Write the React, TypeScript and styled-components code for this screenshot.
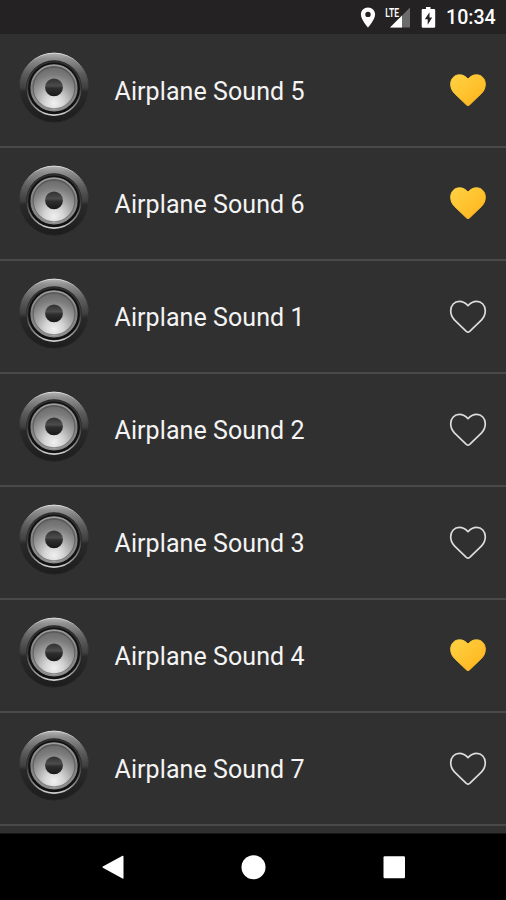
import React from "react";
import styled, { createGlobalStyle } from "styled-components";

const GlobalStyle = createGlobalStyle`
  * { box-sizing: border-box; }
  body { margin: 0; background: #000; font-family: Roboto, sans-serif; }
`;

const Screen = styled.div`
  width: 506px;
  height: 900px;
  display: flex;
  flex-direction: column;
  background: #303030;
  overflow: hidden;
`;

const StatusBar = styled.header`
  flex: none;
  height: 34px;
  display: flex;
  align-items: center;
  justify-content: flex-end;
  padding-right: 10px;
  background: #242223;
  color: #fff;
`;

const StatusIcons = styled.svg`
  display: block;
  margin-right: 10px;
`;

const Clock = styled.time`
  font-size: 19.6px;
  line-height: 34px;
  font-weight: 500;
  width: 50px;
  white-space: nowrap;
  padding-top: 2px;
`;

const List = styled.ul`
  flex: 1;
  min-height: 0;
  margin: 0;
  padding: 1px 0 0;
  list-style: none;
  overflow: hidden;
  border-bottom: 1px solid #161616;
`;

const Row = styled.li`
  height: 113px;
  display: flex;
  align-items: center;
  padding: 0 18px 0 15px;
  border-bottom: 2px solid #494949;
`;

const Label = styled.span`
  flex: 1;
  margin-left: 21.5px;
  padding-top: 3px;
  font-size: 25px;
  line-height: 30px;
  letter-spacing: 0.08px;
  color: #f4f4f4;
  white-space: nowrap;
`;

const HeartButton = styled.button`
  width: 40px;
  height: 40px;
  padding: 0;
  border: 0;
  background: none;
  svg { display: block; }
`;

const NavBar = styled.nav`
  flex: none;
  height: 66px;
  display: flex;
  align-items: center;
  justify-content: space-between;
  padding: 0 98px;
  background: #000;
`;

const NavIcon = styled.svg`
  display: block;
  fill: #fff;
`;

const Gradients = styled.svg`
  display: block;
`;

const SharedGradients = () => (
  <Gradients width="0" height="0" aria-hidden>
    <defs>
      <linearGradient id="rim" x1="0" y1="0" x2="0" y2="1">
        <stop offset="0" stopColor="#b4b4b4" />
        <stop offset="0.08" stopColor="#909090" />
        <stop offset="0.3" stopColor="#5c5c5c" />
        <stop offset="0.5" stopColor="#404040" />
        <stop offset="0.56" stopColor="#292929" />
        <stop offset="1" stopColor="#1d1d1d" />
      </linearGradient>
      <linearGradient id="edge" x1="0" y1="0" x2="0" y2="1">
        <stop offset="0" stopColor="#e2e2e2" />
        <stop offset="0.2" stopColor="#707070" />
        <stop offset="0.5" stopColor="#303030" />
        <stop offset="1" stopColor="#222" />
      </linearGradient>
      <linearGradient id="lip" x1="0" y1="0" x2="0" y2="1">
        <stop offset="0" stopColor="#303030" />
        <stop offset="0.5" stopColor="#3c3c3c" />
        <stop offset="0.8" stopColor="#808080" />
        <stop offset="1" stopColor="#d0d0d0" />
      </linearGradient>
      <linearGradient id="surround" x1="0" y1="0" x2="0" y2="1">
        <stop offset="0" stopColor="#9c9c9c" />
        <stop offset="0.5" stopColor="#808080" />
        <stop offset="1" stopColor="#8c8c8c" />
      </linearGradient>
      <radialGradient id="cone" cx="0.5" cy="0.84" r="0.84">
        <stop offset="0" stopColor="#f0f0f0" />
        <stop offset="0.25" stopColor="#d4d4d4" />
        <stop offset="0.5" stopColor="#a4a4a4" />
        <stop offset="0.75" stopColor="#7c7c7c" />
        <stop offset="1" stopColor="#666" />
      </radialGradient>
      <linearGradient id="cap" x1="0" y1="0" x2="0" y2="1">
        <stop offset="0" stopColor="#303030" />
        <stop offset="0.4" stopColor="#4c4c4c" />
        <stop offset="0.55" stopColor="#2e2e2e" />
        <stop offset="1" stopColor="#181818" />
      </linearGradient>
      <linearGradient id="gold" x1="0" y1="0" x2="1" y2="1">
        <stop offset="0" stopColor="#ffd244" />
        <stop offset="1" stopColor="#ffb31a" />
      </linearGradient>
    </defs>
  </Gradients>
);

const Speaker = () => (
  <svg width="78" height="78" viewBox="0 0 78 78" aria-hidden>
    <circle cx="39" cy="35.6" r="34.5" fill="url(#rim)" stroke="url(#edge)" strokeWidth="1" />
    <circle cx="39" cy="36.2" r="27.9" fill="#222" />
    <circle cx="39" cy="36.4" r="26.7" fill="#111" stroke="url(#lip)" strokeWidth="1.6" />
    <circle cx="39" cy="35.9" r="22.7" fill="url(#cone)" stroke="url(#surround)" strokeWidth="1.8" />
    <circle cx="39" cy="35.9" r="20.9" fill="none" stroke="#4c4c4c" strokeOpacity="0.6" strokeWidth="1.3" />
    <circle cx="39" cy="35.4" r="8.9" fill="url(#cap)" />
  </svg>
);

const HEART_PATH =
  "M20 35.2 C19.4 35.2 18.9 34.8 18.3 34.3 L6.4 22.9 C4 20.3 2.7 17.3 2.7 13.8 C2.7 8.3 6.5 4.4 11.4 4.4 C15.2 4.4 17.6 6 20 8.7 C22.4 6 24.8 4.4 28.6 4.4 C33.5 4.4 37.3 8.3 37.3 13.8 C37.3 17.3 36 20.3 33.6 22.9 L21.7 34.3 C21.1 34.8 20.6 35.2 20 35.2 Z";

const Heart = ({ filled }: { filled: boolean }) => (
  <svg width="40" height="40" viewBox={filled ? "0 0.6 40 40" : "0 0 40 40"} aria-hidden>
    <path
      d={HEART_PATH}
      fill={filled ? "url(#gold)" : "none"}
      stroke={filled ? "url(#gold)" : "#dcdcdc"}
      strokeWidth={filled ? 1 : 1.7}
      strokeLinejoin="round"
    />
  </svg>
);

const sounds = [
  { name: "Airplane Sound 5", favorite: true },
  { name: "Airplane Sound 6", favorite: true },
  { name: "Airplane Sound 1", favorite: false },
  { name: "Airplane Sound 2", favorite: false },
  { name: "Airplane Sound 3", favorite: false },
  { name: "Airplane Sound 4", favorite: true },
  { name: "Airplane Sound 7", favorite: false },
];

export default function App() {
  return (
    <Screen>
      <GlobalStyle />
      <SharedGradients />
      <StatusBar>
        <StatusIcons width="78" height="34" viewBox="358 0 78 34">
          <path
            fill="#fff"
            fillRule="evenodd"
            d="M368 7.400c-4 0-7.100 3-7.100 7 0 5.100 7.100 13 7.100 13s7.100-7.900 7.100-13c0-4-3.100-7-7.100-7zm0 4.300a2.700 2.700 0 1 1 0 5.400a2.700 2.700 0 0 1 0-5.400z"
          />
          <path d="M410 7.500V27.500H390Z" fill="#6b6b6b" />
          <path d="M402 15.500V27.500H390Z" fill="#fff" />
          <text x="385.3" y="16.5" fill="#fff" stroke="#242223" strokeWidth="2" paintOrder="stroke" fontSize="12" fontWeight="600" textLength="13.7" lengthAdjust="spacingAndGlyphs">LTE</text>
          <path
            fill="#fff"
            fillRule="evenodd"
            d="M426 7h4.500v2H434a1.200 1.200 0 0 1 1.200 1.200V26.500a1.300 1.300 0 0 1-1.300 1.300H423a1.300 1.300 0 0 1-1.300-1.300V10.200A1.200 1.200 0 0 1 423 9h3zM429.500 12.200L424.800 19.300H427.700V24.800L432.200 17.500H429.500Z"
          />
        </StatusIcons>
        <Clock>10:34</Clock>
      </StatusBar>
      <List>
        {sounds.map((s) => (
          <Row key={s.name}>
            <Speaker />
            <Label>{s.name}</Label>
            <HeartButton aria-label="Favorite" aria-pressed={s.favorite}>
              <Heart filled={s.favorite} />
            </HeartButton>
          </Row>
        ))}
      </List>
      <NavBar>
        <NavIcon width="28" height="28" viewBox="0 0 28 28">
          <path d="M4.800 13.600L24.500 2.700Q25.500 2.500 25.500 3.500V25Q25.500 26.200 24.500 25.600L4.800 14.800Q4 14.200 4.800 13.600Z" />
        </NavIcon>
        <NavIcon width="28" height="28" viewBox="0 0 28 28">
          <circle cx="14.5" cy="14.2" r="12" />
        </NavIcon>
        <NavIcon width="28" height="28" viewBox="0 0 28 28">
          <rect x="3.5" y="3.2" width="21.5" height="22" rx="1.2" />
        </NavIcon>
      </NavBar>
    </Screen>
  );
}
